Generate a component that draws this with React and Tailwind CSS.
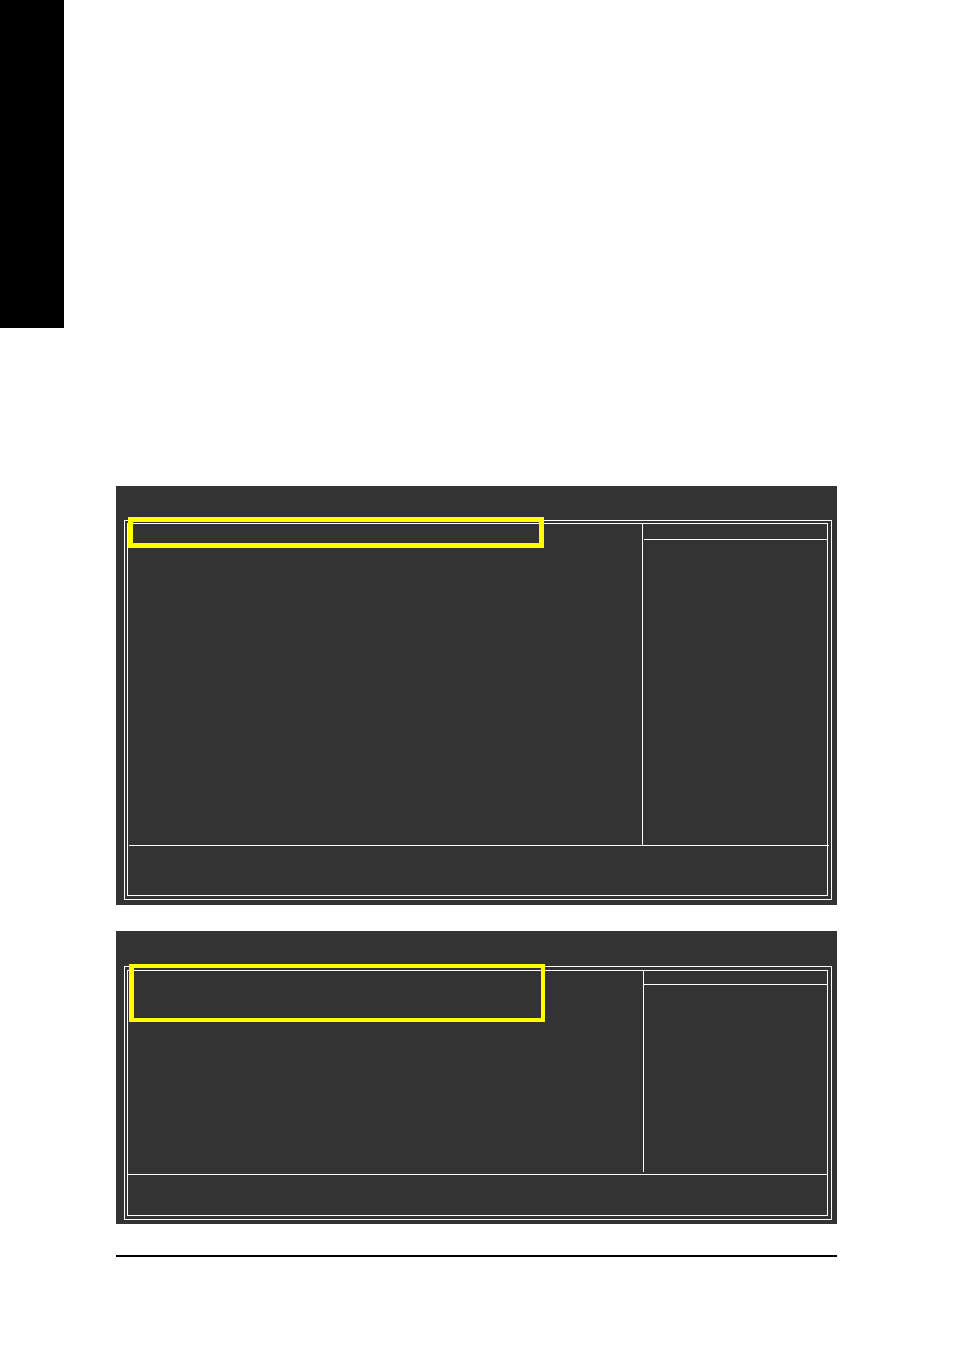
import clsx from 'clsx';

const SCREENS = [
  {
    id: 'first',
    outer: 'mb-[26px] pt-[34px] pb-[5px]',
    frame: 'pt-[2px]',
    body: 'h-[321px]',
    side: 'w-[185px]',
    sideHead: 'ml-px h-4',
    keys: 'ml-px -mr-[2px] h-[50px]',
    highlight: 'left-0 h-[31px] border-5',
  },
  {
    id: 'second',
    outer: 'mb-[31px] pt-[35px] pb-1',
    frame: 'pt-[3px]',
    body: 'h-[203px] pb-[2px]',
    side: 'w-[184px]',
    sideHead: 'h-[14px]',
    keys: 'h-[41px]',
    highlight: 'left-px h-[58px] border-4 border-l-5',
  },
];

export default function App() {
  return (
    <div className="flex min-h-screen items-start bg-white font-['Liberation_Sans',sans-serif]">
      {/* Chapter tab */}
      <aside className="h-[328px] w-16 shrink-0 bg-black" />

      <main className="min-w-0 flex-1 pt-[486px] pr-[117px] pl-[52px]">
        {SCREENS.map((screen) => (
          <BiosScreen key={screen.id} screen={screen} />
        ))}
        <hr className="border-t-2 border-black" />
      </main>
    </div>
  );
}

function BiosScreen({ screen }) {
  return (
    <section className={clsx('bg-[#333333] pr-[5px] pl-2', screen.outer)}>
      {/* Double frame */}
      <div className={clsx('border border-white pr-[3px] pb-[3px] pl-[2px]', screen.frame)}>
        <div className="relative border border-white">
          <div className={clsx('flex', screen.body)}>
            <div className="flex-1" />
            <div className={clsx('border-l border-white', screen.side)}>
              <div className={clsx('border-b border-white', screen.sideHead)} />
            </div>
          </div>

          {/* Key legend */}
          <div className={clsx('border-t border-white', screen.keys)} />

          {/* Highlighted menu items */}
          <div className={clsx('absolute -top-[7px] w-[416px] max-w-full border-[#ffff00]', screen.highlight)} />
        </div>
      </div>
    </section>
  );
}
